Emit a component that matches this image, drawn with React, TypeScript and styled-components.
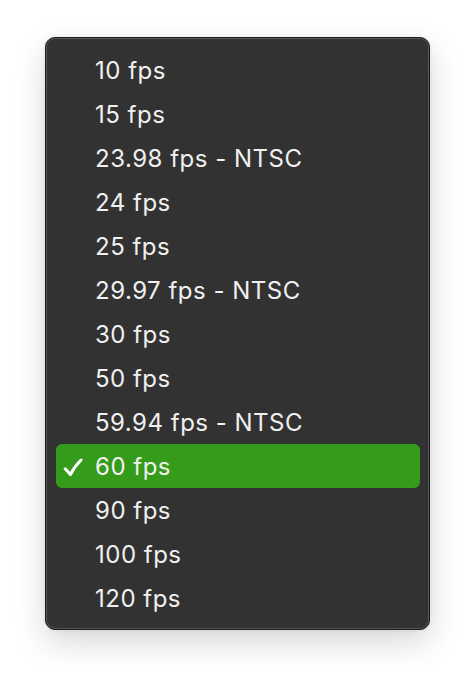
import React from 'react';
import styled, { createGlobalStyle } from 'styled-components';

const RATES = [
  '10 fps',
  '15 fps',
  '23.98 fps - NTSC',
  '24 fps',
  '25 fps',
  '29.97 fps - NTSC',
  '30 fps',
  '50 fps',
  '59.94 fps - NTSC',
  '60 fps',
  '90 fps',
  '100 fps',
  '120 fps',
];

const SELECTED = '60 fps';

export default function App() {
  return (
    <>
      <GlobalStyle />
      <S_Page>
        <S_Menu role='menu'>
          {RATES.map((rate) => {
            const isSelected = rate === SELECTED;
            return (
              <S_Item key={rate} role='menuitemradio' aria-checked={isSelected} isSelected={isSelected}>
                <S_Check>
                  {isSelected && (
                    <svg width='20' height='19' viewBox='0 0 20 19' fill='none'>
                      <path
                        d='M2.2 10.8 L7.4 16.6 Q11 9 18 2'
                        stroke='#fff'
                        strokeWidth='3'
                        strokeLinecap='round'
                        strokeLinejoin='round'
                      />
                    </svg>
                  )}
                </S_Check>
                <S_Label>{rate}</S_Label>
              </S_Item>
            );
          })}
        </S_Menu>
      </S_Page>
    </>
  );
}

const GlobalStyle = createGlobalStyle`
  html, body {
    margin: 0;
    background: #ffffff;
  }
`;

const S_Page = styled.div`
  width: 476px;
  height: 684px;
  padding: 37px 0 0 45px;
  box-sizing: border-box;
`;

const S_Menu = styled.div`
  width: 385px;
  box-sizing: border-box;
  padding: 10px 9px 9px 10px;
  background: #323232;
  border: 1px solid #1c1c1c;
  border-radius: 10px;
  box-shadow: inset 0 0 0 1px #565656, 0 12px 32px rgba(0, 0, 0, 0.16), 0 0 4px rgba(0, 0, 0, 0.08);
  font-family: Inter, 'Liberation Sans', sans-serif;
`;

const S_Item = styled.div<{ isSelected: boolean }>`
  display: flex;
  align-items: center;
  height: 44px;
  padding-top: 2px;
  box-sizing: border-box;
  border-radius: 6px;
  background: ${(props) => (props.isSelected ? '#359b1a' : 'transparent')};
  color: #f0f0f0;
`;

const S_Check = styled.span`
  display: flex;
  align-items: center;
  width: 39px;
  padding-left: 7px;
  box-sizing: border-box;
`;

const S_Label = styled.span`
  font-size: 24px;
  letter-spacing: 0.5px;
  line-height: 1;
`;
